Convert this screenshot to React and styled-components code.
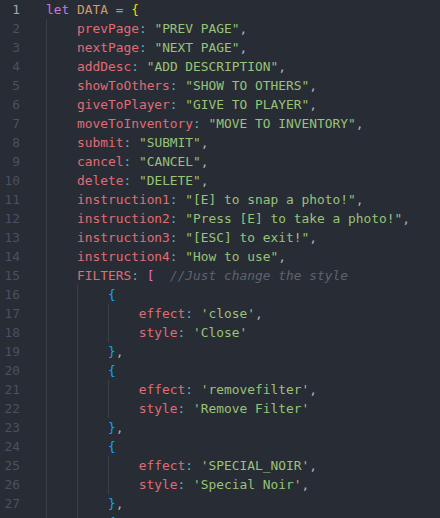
import React from "react";
import styled, { createGlobalStyle } from "styled-components";

const GlobalStyle = createGlobalStyle`
  html, body {
    margin: 0;
    padding: 0;
    background: #282c34;
    overflow: hidden;
  }
`;

const COLORS = {
  kw: "#c678dd",
  var: "#d19a66",
  op: "#56b6c2",
  prop: "#e06c75",
  str: "#98c379",
  punc: "#abb2bf",
  b1: "#ffd700",
  b2: "#da70d6",
  b3: "#179fff",
  cm: "#5c6370",
  txt: "#abb2bf",
};

const Editor = styled.div`
  width: 440px;
  height: 518px;
  overflow: hidden;
  background: #282c34;
  font-family: "DejaVu Sans Mono", "Liberation Mono", monospace;
  font-size: 12.87px;
  display: flex;
  flex-direction: column;
`;

const Row = styled.div`
  display: flex;
  height: 19px;
  line-height: 19px;
  white-space: pre;
`;

const Gutter = styled.div`
  width: 46px;
  flex: none;
  display: flex;
`;

const LineNo = styled.span`
  width: 20px;
  text-align: right;
  color: ${({ $active }) => ($active ? "#a0a6b1" : "#495162")};
`;

const Indent = styled.span`
  display: inline-block;
  box-sizing: border-box;
  width: 4ch;
  height: 19px;
  border-left: 1px solid #3b4048;
`;

const Tok = styled.span`
  color: ${({ $c }) => COLORS[$c] || COLORS.txt};
  font-style: ${({ $c }) => ($c === "cm" ? "italic" : "normal")};
`;

const prop = (depth, name, value, comma = true) => [
  depth,
  ["prop", name],
  ["op", ":"],
  ["txt", " "],
  ["str", value],
  ...(comma ? [["punc", ","]] : []),
];

const LINES = [
  [0, ["kw", "let"], ["txt", " "], ["var", "DATA"], ["txt", " "], ["op", "="], ["txt", " "], ["b1", "{"]],
  prop(1, "prevPage", '"PREV PAGE"'),
  prop(1, "nextPage", '"NEXT PAGE"'),
  prop(1, "addDesc", '"ADD DESCRIPTION"'),
  prop(1, "showToOthers", '"SHOW TO OTHERS"'),
  prop(1, "giveToPlayer", '"GIVE TO PLAYER"'),
  prop(1, "moveToInventory", '"MOVE TO INVENTORY"'),
  prop(1, "submit", '"SUBMIT"'),
  prop(1, "cancel", '"CANCEL"'),
  prop(1, "delete", '"DELETE"'),
  prop(1, "instruction1", '"[E] to snap a photo!"'),
  prop(1, "instruction2", '"Press [E] to take a photo!"'),
  prop(1, "instruction3", '"[ESC] to exit!"'),
  prop(1, "instruction4", '"How to use"'),
  [1, ["prop", "FILTERS"], ["op", ":"], ["txt", " "], ["b2", "["], ["txt", "  "], ["cm", "//Just change the style"]],
  [2, ["b3", "{"]],
  prop(3, "effect", "'close'"),
  prop(3, "style", "'Close'", false),
  [2, ["b3", "}"], ["punc", ","]],
  [2, ["b3", "{"]],
  prop(3, "effect", "'removefilter'"),
  prop(3, "style", "'Remove Filter'", false),
  [2, ["b3", "}"], ["punc", ","]],
  [2, ["b3", "{"]],
  prop(3, "effect", "'SPECIAL_NOIR'"),
  prop(3, "style", "'Special Noir'"),
  [2, ["b3", "}"], ["punc", ","]],
  [2, ["b3", "{"]],
];

const App = () => {
  return (
    <>
      <GlobalStyle />
      <Editor>
        {LINES.map(([depth, ...tokens], i) => (
          <Row key={i}>
            <Gutter>
              <LineNo $active={i === 0}>{i + 1}</LineNo>
            </Gutter>
            {Array.from({ length: depth }).map((_, d) => (
              <Indent key={d} />
            ))}
            {tokens.map(([c, text], j) => (
              <Tok key={j} $c={c}>
                {text}
              </Tok>
            ))}
          </Row>
        ))}
      </Editor>
    </>
  );
};

export default App;
